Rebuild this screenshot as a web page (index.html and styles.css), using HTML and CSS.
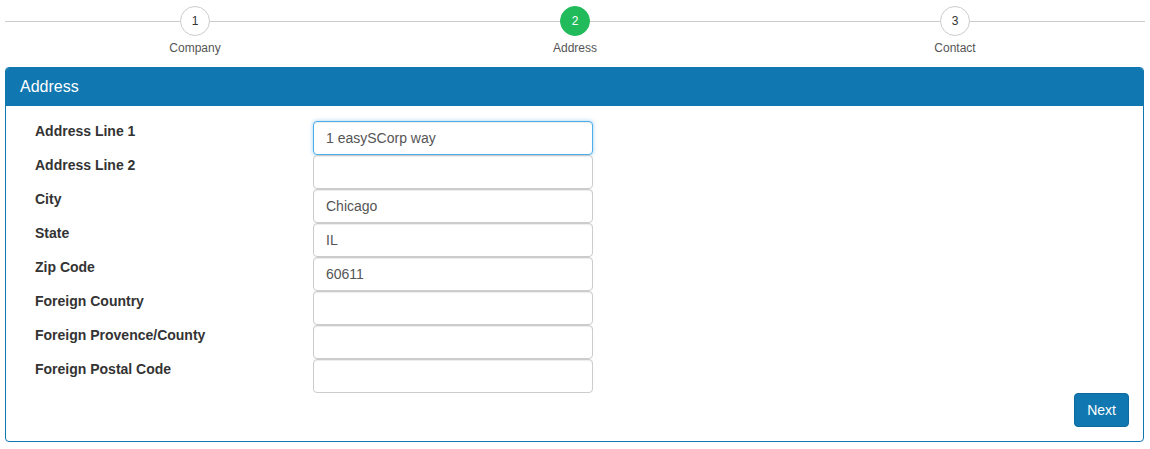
FILE: index.html
```html
<!DOCTYPE html>
<html>
<head>
<meta charset="utf-8">
<link rel="stylesheet" href="styles.css">
</head>
<body>
<div class="stepper">
  <div class="step">
    <div class="circle">1</div>
    <div class="step-label">Company</div>
  </div>
  <div class="step">
    <div class="circle active">2</div>
    <div class="step-label">Address</div>
  </div>
  <div class="step">
    <div class="circle">3</div>
    <div class="step-label">Contact</div>
  </div>
</div>
<div class="panel">
  <div class="panel-heading">Address</div>
  <div class="panel-body">
    <div class="form">
      <label class="lbl">Address Line 1</label><input class="inp focus" value="1 easySCorp way">
      <label class="lbl">Address Line 2</label><input class="inp" value="">
      <label class="lbl">City</label><input class="inp" value="Chicago">
      <label class="lbl">State</label><input class="inp" value="IL">
      <label class="lbl">Zip Code</label><input class="inp" value="60611">
      <label class="lbl">Foreign Country</label><input class="inp" value="">
      <label class="lbl">Foreign Provence/County</label><input class="inp" value="">
      <label class="lbl">Foreign Postal Code</label><input class="inp" value="">
    </div>
    <div class="actions"><button class="btn">Next</button></div>
  </div>
</div>
</body>
</html>
```
FILE: styles.css
```css
* { box-sizing: border-box; }
body {
  margin: 0;
  padding: 0 5px;
  font-family: "Liberation Sans", Arial, sans-serif;
  font-size: 14px;
  color: #333;
  background: #fff;
}
.stepper {
  display: grid;
  grid-template-columns: 1fr 1fr 1fr;
  padding-top: 6px;
  height: 67px;
}
.step {
  position: relative;
  display: flex;
  flex-direction: column;
  align-items: center;
}
.step::before {
  content: "";
  position: absolute;
  left: 0;
  right: 0;
  top: 15px;
  height: 1px;
  background: #ccc;
}
.circle {
  position: relative;
  width: 30px;
  height: 30px;
  border-radius: 50%;
  border: 1px solid #ccc;
  background: #fff;
  display: flex;
  align-items: center;
  justify-content: center;
  font-size: 12px;
  color: #333;
}
.circle.active {
  background: #22bb5c;
  border-color: #22bb5c;
  color: #fff;
}
.step-label {
  margin-top: 5px;
  font-size: 12px;
  color: #555;
  line-height: 14px;
}
.panel {
  border: 1px solid #1077b0;
  border-radius: 4px;
  margin-right: 1px;
}
.panel-heading {
  background: #1077b0;
  color: #fff;
  font-size: 16px;
  height: 38px;
  line-height: 38px;
  padding: 0 14px;
  border-radius: 3px 3px 0 0;
}
.panel-body {
  padding: 15px 14px 14px 29px;
}
.form {
  display: grid;
  grid-template-columns: 278px 280px;
}
.lbl {
  font-weight: bold;
  font-size: 14px;
  line-height: 20px;
  color: #333;
}
.inp {
  height: 34px;
  width: 280px;
  border: 1px solid #ccc;
  border-radius: 4px;
  padding: 6px 12px;
  font-family: "Liberation Sans", Arial, sans-serif;
  font-size: 14px;
  color: #555;
  box-shadow: inset 0 1px 1px rgba(0,0,0,0.075);
  outline: none;
}
.inp.focus {
  border-color: #4aaee9;
  box-shadow: inset 0 1px 1px rgba(0,0,0,0.075), 0 0 4px rgba(102,175,233,0.6);
}
.actions {
  display: flex;
  justify-content: flex-end;
}
.btn {
  height: 34px;
  padding: 6px 12px;
  background: #1077b0;
  color: #fff;
  border: 1px solid #0d6a9e;
  border-radius: 4px;
  font-family: "Liberation Sans", Arial, sans-serif;
  font-size: 14px;
}
```
